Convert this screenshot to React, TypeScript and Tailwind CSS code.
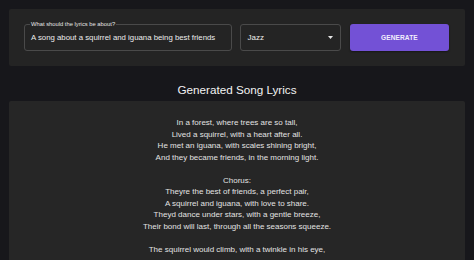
const lyrics = [
  'In a forest, where trees are so tall,',
  'Lived a squirrel, with a heart after all.',
  'He met an iguana, with scales shining bright,',
  'And they became friends, in the morning light.',
  '',
  'Chorus:',
  'Theyre the best of friends, a perfect pair,',
  'A squirrel and iguana, with love to share.',
  'Theyd dance under stars, with a gentle breeze,',
  'Their bond will last, through all the seasons squeeze.',
  '',
  'The squirrel would climb, with a twinkle in his eye,',
];

export default function App() {
  return (
    <div className="min-h-screen bg-[#17171b] px-[9px] pt-[9px] font-['Liberation_Sans',Arial,sans-serif] text-[#e8e8e8]">
      <div className="flex h-[57px] items-center gap-[8px] rounded-[2px] bg-[#242424] pl-[15px] pr-[16px]">
        <div className="relative flex h-[27px] w-[210px] items-center rounded-[3px] border border-[#4a4a4a] px-[6px]">
          <span className="absolute left-[5px] top-[-5px] bg-[#242424] px-[1px] text-[5.8px] leading-[8px] text-[#e6e6e6]">
            What should the lyrics be about?
          </span>
          <span className="whitespace-nowrap text-[7.8px] text-[#ececec]">
            A song about a squirrel and iguana being best friends
          </span>
        </div>
        <div className="flex h-[27px] w-[101px] items-center justify-between rounded-[3px] border border-[#4a4a4a] pl-[6px] pr-[7px]">
          <span className="text-[8px] text-[#ececec]">Jazz</span>
          <svg width="5" height="3" viewBox="0 0 5 3">
            <path d="M0 0h5L2.5 3z" fill="#e6e6e6" />
          </svg>
        </div>
        <button className="ml-[1px] h-[27px] w-[100px] rounded-[3px] bg-[#7351d6] text-[6.6px] font-semibold tracking-[0.1px] text-[#f2eefc] shadow-[0_1px_2px_rgba(0,0,0,0.4)]">
          GENERATE
        </button>
      </div>

      <h2 className="mb-[4px] mt-[17px] text-center text-[11.7px] leading-[14px] text-[#f2f2f2]">
        Generated Song Lyrics
      </h2>

      <div className="rounded-t-[2px] bg-[#262626] pb-[16px] pt-[16px] text-center text-[8px] leading-[11.5px] text-[#e2e2e2]">
        {lyrics.map((line, i) => (
          <p key={i} className="h-[11.5px]">
            {line}
          </p>
        ))}
      </div>
    </div>
  );
}
